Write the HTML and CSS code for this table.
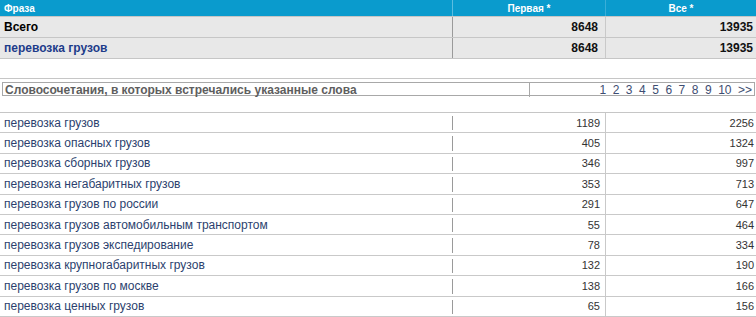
FILE: index.html
```html
<!DOCTYPE html>
<html>
<head>
<meta charset="utf-8">
<link rel="stylesheet" href="styles.css">
</head>
<body>
<div class="table">
  <div class="row head">
    <div class="c1">Фраза</div>
    <div class="c2">Первая *</div>
    <div class="c3">Все *</div>
  </div>
  <div class="row total">
    <div class="c1">Всего</div>
    <div class="c2">8648</div>
    <div class="c3">13935</div>
  </div>
  <div class="row total">
    <div class="c1 link">перевозка грузов</div>
    <div class="c2">8648</div>
    <div class="c3">13935</div>
  </div>
  <div class="row blank"></div>
  <div class="combo">
    <div class="combo-box">
      <div class="combo-title">Словосочетания, в которых встречались указанные слова</div>
      <div class="pages">
        <span>1</span><span>2</span><span>3</span><span>4</span><span>5</span><span>6</span><span>7</span><span>8</span><span>9</span><span>10</span><span>&gt;&gt;</span>
      </div>
    </div>
  </div>
  <div class="row data"><div class="c1">перевозка грузов</div><div class="c2">1189</div><div class="c3">2256</div></div>
  <div class="row data"><div class="c1">перевозка опасных грузов</div><div class="c2">405</div><div class="c3">1324</div></div>
  <div class="row data"><div class="c1">перевозка сборных грузов</div><div class="c2">346</div><div class="c3">997</div></div>
  <div class="row data"><div class="c1">перевозка негабаритных грузов</div><div class="c2">353</div><div class="c3">713</div></div>
  <div class="row data"><div class="c1">перевозка грузов по россии</div><div class="c2">291</div><div class="c3">647</div></div>
  <div class="row data"><div class="c1">перевозка грузов автомобильным транспортом</div><div class="c2">55</div><div class="c3">464</div></div>
  <div class="row data"><div class="c1">перевозка грузов экспедирование</div><div class="c2">78</div><div class="c3">334</div></div>
  <div class="row data"><div class="c1">перевозка крупногабаритных грузов</div><div class="c2">132</div><div class="c3">190</div></div>
  <div class="row data"><div class="c1">перевозка грузов по москве</div><div class="c2">138</div><div class="c3">166</div></div>
  <div class="row data"><div class="c1">перевозка ценных грузов</div><div class="c2">65</div><div class="c3">156</div></div>
</div>
</body>
</html>
```
FILE: styles.css
```css
html, body {
  margin: 0;
  padding: 0;
  background: #ffffff;
}
body {
  font-family: "Liberation Sans", Arial, sans-serif;
  font-size: 11px;
  width: 756px;
  overflow: hidden;
}
.table {
  display: flex;
  flex-direction: column;
}
.row {
  display: grid;
  grid-template-columns: 452px 153px 151px;
  align-items: stretch;
}
.row > div {
  display: flex;
  align-items: center;
  white-space: nowrap;
}
.c1 { padding-left: 4px; font-size: 12px; }
.c2, .c3 { justify-content: flex-end; font-size: 11px; }
.c2 { padding-right: 5px; }
.c3 { padding-right: 2px; }

.head {
  height: 16px;
  background: #0a9bcd;
  color: #ffffff;
  font-weight: bold;
}
.head > div { font-size: 10px; }
.head .c2, .head .c3 { justify-content: center; padding-right: 0; }
.head .c2 { border-left: 1px solid #5cbde0; }
.head .c3 { border-left: 1px solid #3aaed8; }

.total {
  height: 20px;
  background: #e8e8e8;
  border-top: 1px solid #c6c6c6;
  font-weight: bold;
  color: #000;
}
.total .c1.link { color: #1d3c8a; }
.total .c2 { border-left: 1px solid #9a9a9a; padding-right: 7px; }
.total .c3 { border-left: 1px solid #c9c9c9; padding-right: 3px; }
.total .c2, .total .c3 { color: #111; font-size: 12px; }

.blank {
  height: 19px;
  border-top: 1px solid #c6c6c6;
  border-bottom: 1px solid #c6c6c6;
}

.combo {
  height: 34px;
  border-bottom: 1px solid #c6c6c6;
  padding: 3px 1px 0 2px;
  box-sizing: border-box;
}
.combo-box {
  display: grid;
  grid-template-columns: 526px 1fr;
  height: 14px;
  border: 1px solid #a8a8a8;
  box-sizing: border-box;
}
.combo-title {
  display: flex;
  align-items: center;
  padding-left: 2px;
  font-weight: bold;
  font-size: 12px;
  color: #5e5e5e;
}
.pages {
  display: flex;
  align-items: center;
  justify-content: flex-end;
  gap: 6.5px;
  border-left: 1px solid #a8a8a8;
  padding-right: 2px;
  color: #3d4d72;
  font-size: 12px;
}

.data {
  height: 20.4px;
  border-bottom: 1px solid #c9c9c9;
  box-sizing: border-box;
  color: #333;
}
.data .c1 { color: #2c3f6e; }
.data .c2 { position: relative; }
.data .c2::before {
  content: "";
  position: absolute;
  left: 0;
  top: 3px;
  bottom: 2px;
  border-left: 1px solid #9a9a9a;
}
.data .c3 { border-left: 1px solid #c9c9c9; }
```
